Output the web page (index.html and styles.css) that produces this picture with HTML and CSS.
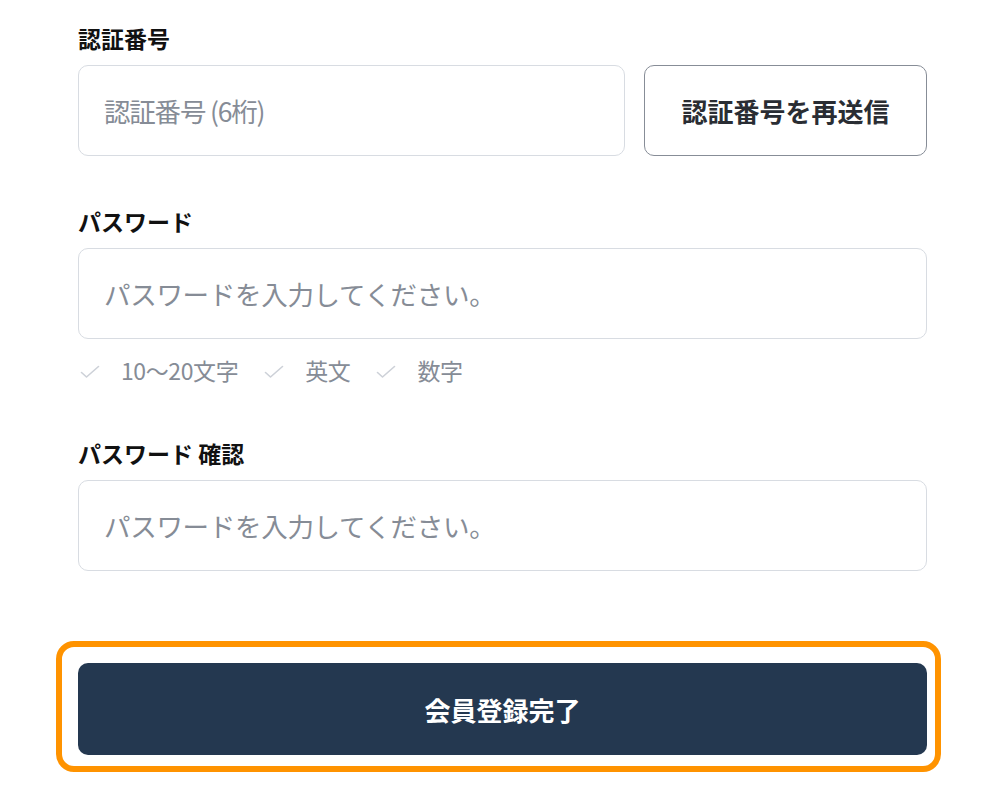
FILE: index.html
```html
<!DOCTYPE html>
<html lang="ja">
<head>
<meta charset="utf-8">
<link rel="stylesheet" href="styles.css">
</head>
<body>
<main class="form">
  <section class="group">
    <div class="label">認証番号</div>
    <div class="row">
      <div class="input code">認証番号 (6桁)</div>
      <button class="resend">認証番号を再送信</button>
    </div>
  </section>

  <section class="group g2">
    <div class="label">パスワード</div>
    <div class="input">パスワードを入力してください。</div>
    <ul class="checks">
      <li><svg class="ck" viewBox="0 0 20 14" width="20" height="14"><path d="M1.5 7.5 L6.5 12 L18.5 1.5" fill="none" stroke="#cdd1d8" stroke-width="1.6" stroke-linecap="round" stroke-linejoin="round"/></svg>10〜20文字</li>
      <li><svg class="ck" viewBox="0 0 20 14" width="20" height="14"><path d="M1.5 7.5 L6.5 12 L18.5 1.5" fill="none" stroke="#cdd1d8" stroke-width="1.6" stroke-linecap="round" stroke-linejoin="round"/></svg>英文</li>
      <li><svg class="ck" viewBox="0 0 20 14" width="20" height="14"><path d="M1.5 7.5 L6.5 12 L18.5 1.5" fill="none" stroke="#cdd1d8" stroke-width="1.6" stroke-linecap="round" stroke-linejoin="round"/></svg>数字</li>
    </ul>
  </section>

  <section class="group g3">
    <div class="label">パスワード 確認</div>
    <div class="input">パスワードを入力してください。</div>
  </section>

  <div class="highlight">
    <button class="submit">会員登録完了</button>
  </div>
</main>
</body>
</html>
```
FILE: styles.css
```css
* { box-sizing: border-box; }
html, body { margin: 0; padding: 0; background: #fff; }
body {
  font-family: "Noto Sans CJK JP", "Noto Sans", sans-serif;
  color: #111;
}
.form {
  width: 849px;
  margin-left: 78px;
  padding-top: 23px;
}
.label {
  font-size: 23px;
  font-weight: 700;
  line-height: 30px;
  margin-bottom: 12px;
  color: #111;
}
.row {
  display: flex;
  gap: 19px;
}
.input {
  height: 91px;
  border: 1.5px solid #d8dce2;
  border-radius: 10px;
  padding: 0 25px;
  display: flex;
  align-items: center;
  font-size: 26.5px;
  color: #868c96;
  letter-spacing: -0.3px;
}
.input.code { flex: 1; letter-spacing: -1.2px; }
.resend {
  width: 283px;
  height: 91px;
  border: 1.5px solid #878d97;
  border-radius: 10px;
  background: #fff;
  font-family: inherit;
  font-size: 26px;
  font-weight: 700;
  color: #2a2d33;
  padding: 0;
}
.g2 { margin-top: 50px; }
.checks {
  list-style: none;
  margin: 15px 0 0;
  padding: 0 0 0 2px;
  display: flex;
  gap: 26px;
  height: 32px;
  align-items: center;
}
.checks li {
  display: flex;
  align-items: center;
  gap: 21px;
  font-size: 23px;
  color: #868c96;
  letter-spacing: -0.4px;
}
.ck { display: block; margin-top: 4px; }
.g3 { margin-top: 52px; }
.highlight {
  margin: 70px 0 0 -22px;
  width: 885px;
  border: 6px solid #ff9300;
  border-radius: 18px;
  padding: 16px 8px 11px 16px;
}
.submit {
  display: block;
  width: 849px;
  height: 92px;
  border: 0;
  border-radius: 10px;
  background: #243850;
  color: #fff;
  font-family: inherit;
  font-size: 26px;
  font-weight: 700;
  padding: 0;
}
```
